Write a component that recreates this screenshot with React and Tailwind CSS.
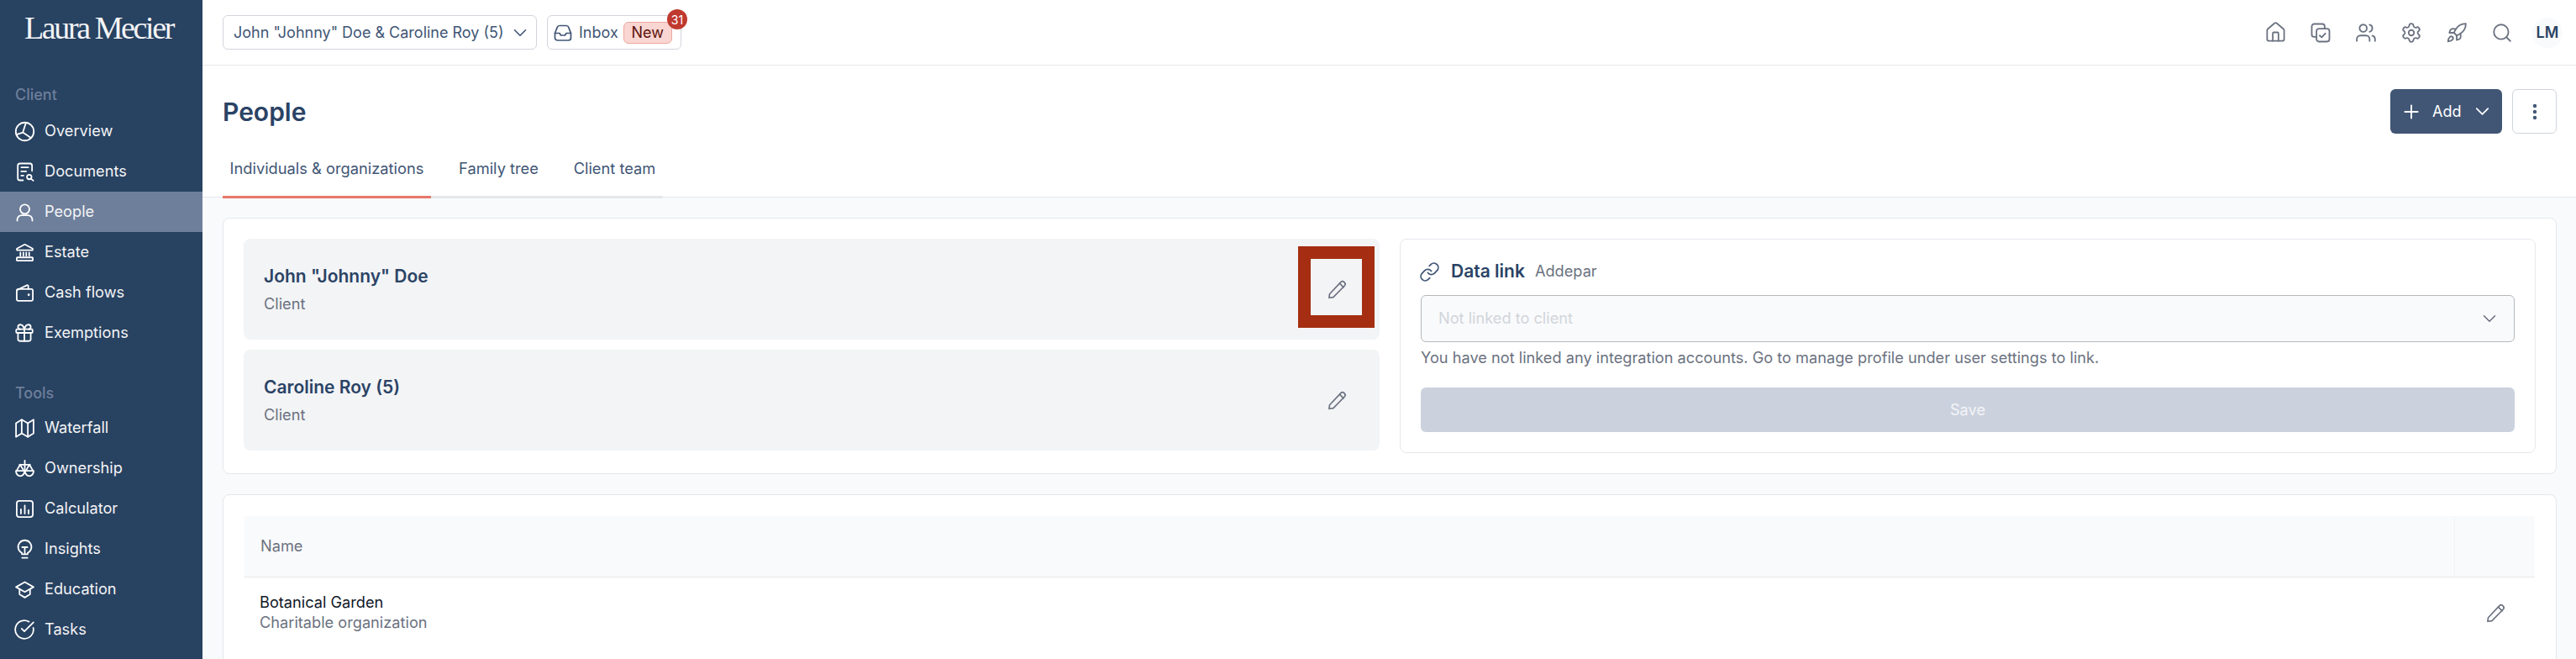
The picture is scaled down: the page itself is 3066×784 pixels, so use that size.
import React from "react";
import { ChevronDown, Plus, EllipsisVertical, Search, Settings, Rocket, House, Users, Link, Gift, CircleCheckBig } from "lucide-react";

const S = ({ children, size = 25, sw = 1.75, className = "" }) => (
  <svg width={size} height={size} viewBox="0 0 24 24" fill="none" stroke="currentColor" strokeWidth={sw} strokeLinecap="round" strokeLinejoin="round" className={className}>{children}</svg>
);
const IOverview = () => <S><circle cx="12" cy="12" r="10.3"/><path d="M13 2.8 9.8 13 2.5 15.5M9.8 13l9.2 6.3"/></S>;
const IDocs = () => <S><path d="M10 21.6H6.5A2.5 2.5 0 0 1 4 19.1V4.9a2.5 2.5 0 0 1 2.5-2.5h11.3a2.5 2.5 0 0 1 2.5 2.5v6"/><path d="M8 6.8h8M8 11.4h5.5M8 16.2h2.5"/><circle cx="17.1" cy="17.8" r="2.6"/><path d="m19.3 20 2.4 2"/></S>;
const IPerson = () => <S><circle cx="12" cy="8.5" r="5.3"/><path d="M3.4 21.6v-1.1a5 5 0 0 1 5-5h7.2a5 5 0 0 1 5 5v1.1"/></S>;
const IBank = () => <S><path d="M3 9.2V7.5l9-4.8 9 4.8v1.7z"/><path d="M7 12v3.5M10.4 12v3.5M13.7 12v3.5M17 12v3.5"/><rect x="2.8" y="17.5" width="18.4" height="3.8" rx="1"/></S>;
const IWallet = () => <S><path d="m3.5 8.5 11-5.3c.8-.3 1.5.2 1.5 1v3.3"/><rect x="2.8" y="7.6" width="18.4" height="13.4" rx="2"/><circle cx="16.5" cy="14.2" r=".5"/></S>;
const IMap = () => <S><path d="M2 6.3 8.5 2.2l7 4.1L22 2.2v15.5l-6.5 4.1-7-4.1L2 21.8z"/><path d="M8.5 2.2v15.5M15.5 6.3v15.5"/></S>;
const IScale = () => <S><path d="M12 2.7v11M6 7.5h12"/><path d="m6.7 7.5-4 6.8M6.7 7.5l4 6.8M17.3 7.5l-4 6.8M17.3 7.5l4 6.8"/><path d="M1.9 14.6h9.8a4.9 6 0 0 1-9.8 0zM12.3 14.6h9.8a4.9 6 0 0 1-9.8 0z"/></S>;
const ICalc = () => <S><rect x="2.8" y="2.8" width="18.4" height="18.4" rx="3"/><path d="M7.6 17.3v-5M12 17.3V8M16.3 17.3v-4"/></S>;
const IBulb = () => <S><path d="M8.7 17.6v-1.5a7.6 7.6 0 1 1 6.6 0v1.5z"/><path d="M9 9.6h6M12 9.6v8M9 21.8h6"/></S>;
const ICap = () => <S><path d="M12 3.4 2 9l10 5.6L22 9z"/><path d="M6 11.6v5.6l6 3.8 6-3.8v-5.6"/></S>;
const IPen = () => <S sw={1.6}><path d="M2.8 21.4 3.4 17 16.2 3.5a2.7 2.7 0 0 1 3.8 0l.4.4a2.7 2.7 0 0 1 0 3.8L7.6 20.7z"/><path d="m14.8 5 4.6 4.4"/></S>;
const IInbox = () => <S size={24} sw={1.7}><path d="M2.5 12.5 5.3 5.4A3 3 0 0 1 8 3.5h8a3 3 0 0 1 2.7 1.9l2.8 7.1v5.5a3 3 0 0 1-3 3h-13a3 3 0 0 1-3-3z"/><path d="M2.5 12.5H8l1.5 2.5h5l1.5-2.5h5.5"/></S>;
const ICopy = () => <S size={26} sw={1.7}><path d="M7.5 16.5H5A2.7 2.7 0 0 1 2.3 13.8V5A2.7 2.7 0 0 1 5 2.3h8.8A2.7 2.7 0 0 1 16.5 5v2.5"/><rect x="7.5" y="7.5" width="14.2" height="14.2" rx="2.7"/><path d="m11 15 2.2 2 4-4.3"/></S>;

const Gft = () => <Gift size={26} strokeWidth={1.65} />;
const Chk = () => <CircleCheckBig size={26} strokeWidth={1.65} />;

const clientItems = [["Overview", IOverview], ["Documents", IDocs], ["People", IPerson, true], ["Estate", IBank], ["Cash flows", IWallet], ["Exemptions", Gft]];
const toolItems = [["Waterfall", IMap], ["Ownership", IScale], ["Calculator", ICalc], ["Insights", IBulb], ["Education", ICap], ["Tasks", Chk]];

function NavRow({ label, Icon, active }) {
  return (
    <div className={`flex h-12 items-center pl-[16px] text-[18.2px] text-[#f3f4f6] ${active ? "bg-[#6e7f9b]" : ""}`}>
      <span className="flex w-[26px] justify-center text-white"><Icon /></span>
      <span className="ml-[11px]">{label}</span>
    </div>
  );
}

function PersonCard({ name, highlighted }) {
  return (
    <div className="relative flex h-[120px] items-center justify-between rounded-lg bg-[#f3f4f6] pl-6 pr-[38px]">
      <div>
        <div className="text-[21px] font-semibold leading-7 text-[#2a4365]">{name}</div>
        <div className="mt-[6px] text-[18.2px] leading-6 text-[#6b7280]">Client</div>
      </div>
      <span className="text-[#6b7280]"><IPen /></span>
      {highlighted && <div className="absolute right-[6px] top-[9px] h-[97px] w-[91px] border-[15px] border-[#a52e12]" />}
    </div>
  );
}

const topIcons = [
  <House key="h" size={27} strokeWidth={1.6} />,
  <ICopy key="c" />,
  <Users key="u" size={26} strokeWidth={1.7} />,
  <Settings key="s" size={26} strokeWidth={1.7} />,
  <Rocket key="r" size={26} strokeWidth={1.7} />,
  <Search key="f" size={26} strokeWidth={1.7} />,
];

export default function App() {
  return (
    <div className="flex h-[784px] w-[3066px] overflow-hidden bg-white font-['Inter',sans-serif]">
      <aside className="w-[241px] shrink-0 bg-[#284261]">
        <div className="flex h-[77px] items-center whitespace-nowrap pb-[11px] pl-[29px] font-['Liberation_Serif',serif] text-[#f3f4f6]">
          <span className="text-[38px] leading-none tracking-[-2.4px]">Laura Mecier</span>
        </div>
        <div className="mb-[7px] mt-6 h-6 pl-[18px] text-[18px] font-medium leading-6 text-[#6e7f9b]">Client</div>
        {clientItems.map(([l, I, a]) => <NavRow key={l} label={l} Icon={I} active={a} />)}
        <div className="mb-[5px] mt-9 h-6 pl-[18px] text-[18px] font-medium leading-6 text-[#6e7f9b]">Tools</div>
        {toolItems.map(([l, I]) => <NavRow key={l} label={l} Icon={I} />)}
      </aside>

      <div className="flex min-w-0 flex-1 flex-col">
        <header className="flex h-[78px] shrink-0 items-center justify-between border-b border-[#e5e7eb] pl-6 pr-4">
          <div className="flex items-center gap-3 text-[18px] text-[#415675]">
            <div className="flex h-[41px] w-[374px] items-center justify-between rounded-md border border-[#d1d5db] pl-[12px] pr-[6px]">
              <span>John "Johnny" Doe &amp; Caroline Roy (5)</span>
              <ChevronDown size={26} strokeWidth={1.5} />
            </div>
            <div className="relative flex h-[41px] w-[160px] items-center rounded-md border border-[#d1d5db] pl-[6px]">
              <IInbox />
              <span className="ml-[7px]">Inbox</span>
              <span className="ml-[6px] flex h-[26px] w-[58px] items-center justify-center rounded-md border border-[#f0a79e] bg-[#f9d6d2] text-[#5e120c]">New</span>
              <span className="absolute right-[-8px] top-[-8px] flex h-6 w-6 items-center justify-center rounded-full bg-[#c0392f] text-[14px] text-white">31</span>
            </div>
          </div>
          <div className="flex items-center text-[#6b7280]">
            {topIcons.map((ic, i) => <span key={i} className="flex w-[54px] justify-center">{ic}</span>)}
            <div className="ml-[9px] flex h-9 w-9 items-center justify-center rounded-full bg-[#f9fafb] text-[18px] font-semibold text-[#2a4365]">LM</div>
          </div>
        </header>

        <section className="relative z-10 h-[157px] shrink-0 border-b border-[#e5e7eb] px-6">
          <div className="flex items-start justify-between pt-7">
            <h1 className="text-[30px] font-semibold leading-[54px] text-[#2a4365]">People</h1>
            <div className="-mr-[1px] flex gap-3">
              <div className="flex h-[53px] w-[133px] items-center rounded-md bg-[#415675] pl-[12px] text-[18px] text-white">
                <Plus size={26} strokeWidth={1.8} />
                <span className="ml-[12px]">Add</span>
                <ChevronDown size={27} strokeWidth={1.6} className="ml-[12px]" />
              </div>
              <div className="flex h-[53px] w-[53px] items-center justify-center rounded-md border border-[#d1d5db] text-[#415675]">
                <EllipsisVertical size={24} strokeWidth={2.4} />
              </div>
            </div>
          </div>
          <div className="mt-[15px] flex h-[61px] w-[524px] items-stretch whitespace-nowrap border-b-[3px] border-[#e5e7eb] text-[18.3px] text-[#415675]">
            <div className="-mb-[3px] flex w-[248px] items-center justify-center border-b-[3px] border-[#e8776a] pb-[6px]">Individuals &amp; organizations</div>
            <div className="ml-[25px] flex w-[111px] items-center justify-center pb-[6px]">Family tree</div>
            <div className="ml-[25px] flex w-[115px] items-center justify-center pb-[6px]">Client team</div>
          </div>
        </section>

        <main className="flex-1 space-y-6 bg-[#f9fafb] pl-6 pr-[23px] pt-6">
          <div className="grid grid-cols-2 gap-[24px] rounded-lg border border-[#e5e7eb] bg-white p-6">
            <div className="space-y-3">
              <PersonCard name={'John "Johnny" Doe'} highlighted />
              <PersonCard name="Caroline Roy (5)" />
            </div>
            <div className="rounded-lg border border-[#e5e7eb] p-6">
              <div className="flex h-7 items-center">
                <Link size={25} strokeWidth={1.7} className="-ml-[2px] text-[#415675]" />
                <span className="ml-[13px] text-[21px] font-semibold text-[#2a4365]">Data link</span>
                <span className="ml-[12px] text-[18.2px] text-[#6b7280]">Addepar</span>
              </div>
              <div className="mt-[14px] flex h-14 items-center justify-between rounded-md border border-[#b5b7bb] bg-[#f9fafb] pl-5 pr-4">
                <span className="text-[18.2px] text-[#d1d5db]">Not linked to client</span>
                <ChevronDown size={26} strokeWidth={1.5} className="text-[#6b7280]" />
              </div>
              <div className="mt-[6px] h-6 text-[18.2px] leading-6 text-[#6b7280]">You have not linked any integration accounts. Go to manage profile under user settings to link.</div>
              <div className="mt-6 flex h-[53px] items-center justify-center rounded-md bg-[#cbd2de] text-[18.2px] text-[#f3f4f6]">Save</div>
            </div>
          </div>

          <div className="h-[300px] rounded-lg border border-[#e5e7eb] bg-white px-[25px] pt-[25px]">
            <div className="flex h-[73px] items-center justify-between border-b border-[#e5e7eb] bg-[#f9fafb] pl-[19px]">
              <span className="text-[18.2px] text-[#6b7280]">Name</span>
              <span className="h-full w-[96px] border-l border-[#f3f4f6]" />
            </div>
            <div className="flex items-start justify-between pl-[18px] pr-[34px] pt-[17px]">
              <div>
                <div className="text-[18.2px] leading-6 text-[#111827]">Botanical Garden</div>
                <div className="text-[18.2px] leading-6 text-[#6b7280]">Charitable organization</div>
              </div>
              <span className="mt-[13px] text-[#6b7280]"><IPen /></span>
            </div>
          </div>
        </main>
      </div>
    </div>
  );
}
